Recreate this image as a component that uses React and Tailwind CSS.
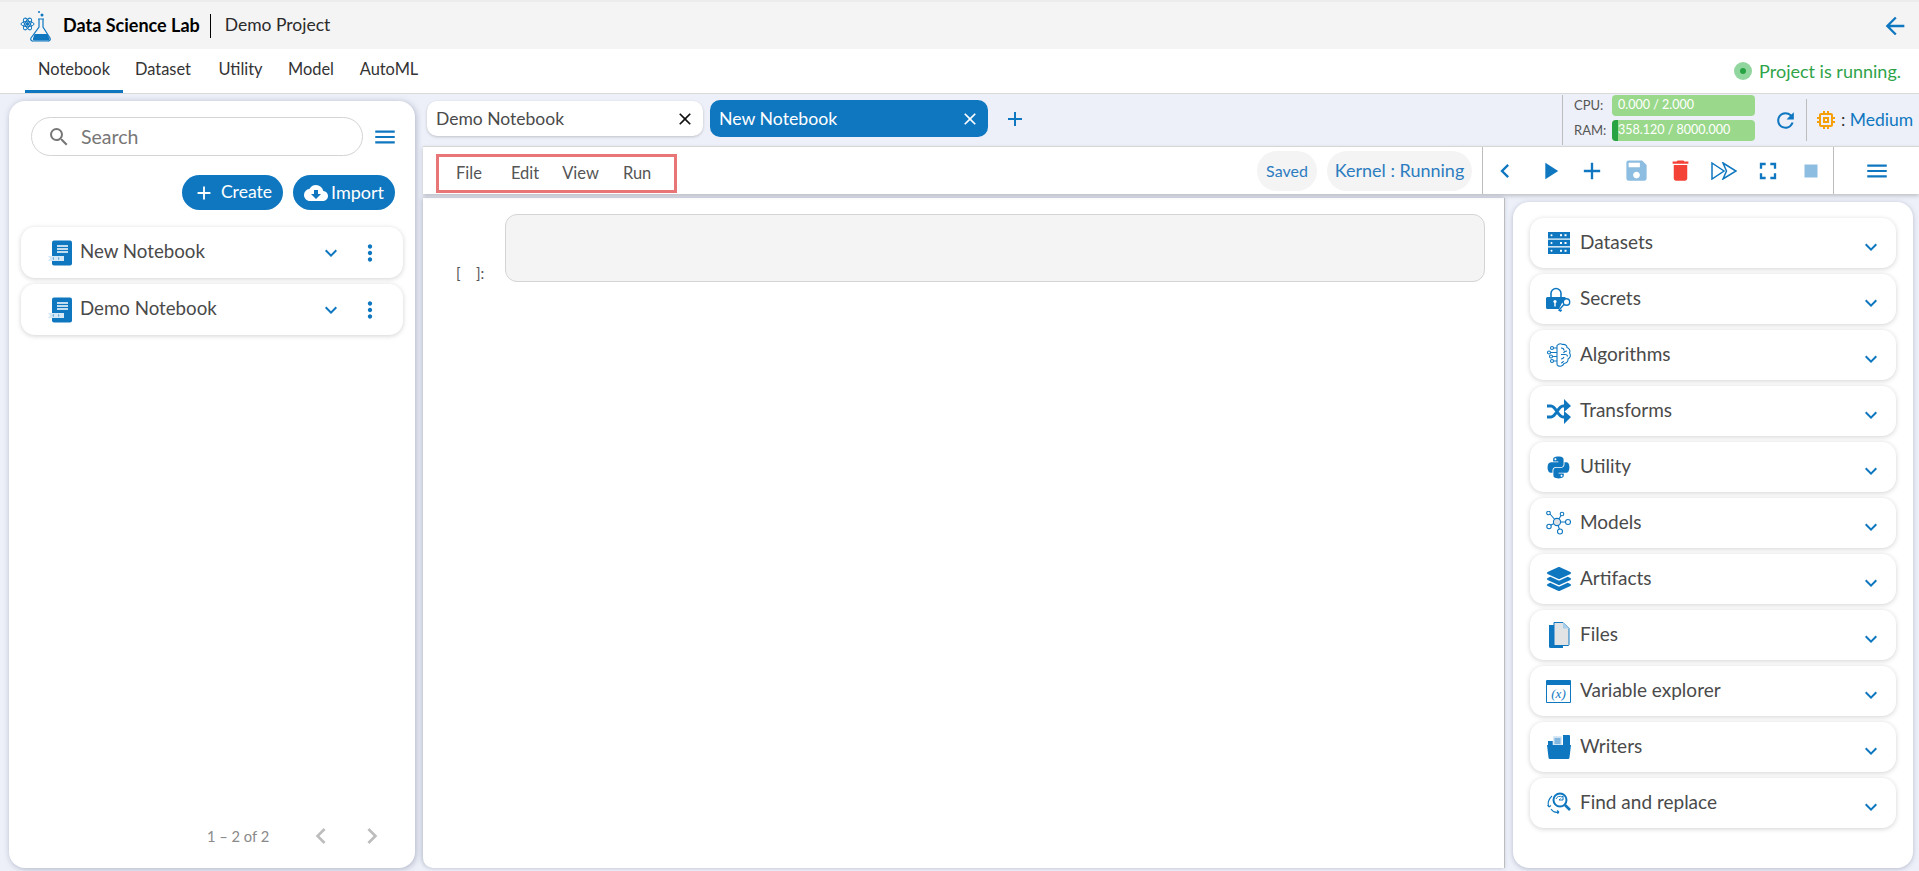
import React from 'react';
import {
  MdArrowBack, MdSearch, MdMenu, MdAdd, MdCloudDownload, MdExpandMore, MdMoreVert, MdClose,
  MdPlayArrow, MdSave, MdDelete, MdFullscreen, MdStop, MdRefresh, MdMemory,
  MdChevronLeft, MdChevronRight,
} from 'react-icons/md';
import { FaPython, FaLayerGroup } from 'react-icons/fa';

const BLUE = '#0f77c0';

const LabLogo = () => (
  <svg width="32" height="32" viewBox="0 0 32 32" fill="none" stroke={BLUE} strokeWidth="1">
    <ellipse cx="7.5" cy="14" rx="6.5" ry="2.6" transform="rotate(60 7.5 14)" />
    <ellipse cx="7.5" cy="14" rx="6.5" ry="2.6" transform="rotate(-60 7.5 14)" />
    <ellipse cx="7.5" cy="14" rx="6.5" ry="2.6" />
    <circle cx="7.5" cy="14" r="1.4" fill={BLUE} />
    <path d="M18 9h6M19 9v8L11 28a2 2 0 0 0 2 3h15a2 2 0 0 0 2-3l-7-11V9" strokeWidth="1.2" />
    <path d="M14.5 24h13l2 5a1.5 1.5 0 0 1-1.5 1.5H14a1.5 1.5 0 0 1-1-2z" fill={BLUE} stroke="none" />
    <circle cx="22" cy="5" r="1.5" fill={BLUE} stroke="none" />
    <circle cx="19" cy="2" r="1" fill={BLUE} stroke="none" />
  </svg>
);

const NotebookIcon = () => (
  <svg width="24" height="26" viewBox="0 0 24 26">
    <rect x="4" y="0.5" width="20" height="25" rx="2" fill={BLUE} />
    <path d="M9 6h11M9 9h11M9 12h11" stroke="#fff" strokeWidth="1.3" />
    <path d="M0 16h16v5H0l2-2.5z" fill="#d5e8f6" />
    <path d="M6 17.5l-1.2 1 1.2 1M10 17.5l1.2 1-1.2 1" stroke={BLUE} strokeWidth="0.7" fill="none" />
  </svg>
);

const DatasetsIcon = () => (
  <svg width="22" height="22" viewBox="0 0 22 22" fill={BLUE}>
    <rect width="22" height="6.5" />
    <rect y="7.7" width="22" height="6.5" />
    <rect y="15.5" width="22" height="6.5" />
    <g fill="#fff">
      <circle cx="3.5" cy="3.2" r="1" /><rect x="12" y="2.2" width="2" height="2" /><rect x="16.5" y="2.2" width="2" height="2" />
      <circle cx="3.5" cy="11" r="1" /><rect x="12" y="10" width="2" height="2" /><rect x="16.5" y="10" width="2" height="2" />
      <circle cx="3.5" cy="18.8" r="1" /><rect x="12" y="17.8" width="2" height="2" /><rect x="16.5" y="17.8" width="2" height="2" />
    </g>
  </svg>
);

const SecretsIcon = () => (
  <svg width="25" height="25" viewBox="0 0 25 25">
    <path d="M5 10V6.5a5 5 0 0 1 10 0V10" fill="none" stroke={BLUE} strokeWidth="1.6" />
    <path d="M1.5 10h17a1.5 1.5 0 0 1 1.5 1.5v2.5l-4 2-3 6H1.5A1.5 1.5 0 0 1 0 20.5v-9A1.5 1.5 0 0 1 1.5 10z" fill={BLUE} />
    <circle cx="9" cy="14.5" r="1.6" fill="#fff" />
    <rect x="8.3" y="15" width="1.4" height="4.5" fill="#fff" />
    <circle cx="20.5" cy="15" r="3.2" fill="#fff" stroke={BLUE} strokeWidth="1.4" />
    <path d="M18 17.5l-5 5.5 1.5 1 1.2-1.2" fill="none" stroke={BLUE} strokeWidth="1.4" />
  </svg>
);

const AlgorithmsIcon = () => (
  <svg width="25" height="25" viewBox="0 0 25 25" fill="none" stroke={BLUE} strokeWidth="1.1">
    <path d="M11 2.5C12.500 .8 15 .5 16.500 1.500c2.500-.5 4.500 1 4.500 3 2.500.8 3.500 3.500 2.500 5.500 1.500 2 1 5-1.500 6 .3 2.500-1.500 4.500-4 4.500-1 2.500-4 3.500-6 2.200-.7-.4-1-.9-1-1.700V2.500z" />
    <path d="M15 5c2 0 3 1 3 2.500M21 8c-1.500 0-3 .5-3.500 2M15 11.500h4c1.500 0 2.500 1 2.500 2M15 16c1.500 0 2.500-.8 3-2M15 20c1 0 2-.7 2.500-2" />
    <path d="M11 5H7.500M11 9.500H4.500M11 13.500H6.500M11 18H7.500" />
    <circle cx="6" cy="5" r="1.500" /><circle cx="3" cy="9.500" r="1.500" /><circle cx="5" cy="13.500" r="1.500" /><circle cx="6" cy="18" r="1.500" />
  </svg>
);

const TransformsIcon = () => (
  <svg width="24" height="25" viewBox="0 0 24 25">
    <path d="M0 7h4c5 0 7 11 12 11h3M0 18h4c5 0 7-11 12-11h3" fill="none" stroke={BLUE} strokeWidth="3" />
    <path d="M17 0l7 7-7 6zM17 12l7 6-7 7z" fill={BLUE} />
  </svg>
);

const ModelsIcon = () => (
  <svg width="25" height="24" viewBox="0 0 25 24" fill="none" stroke={BLUE} strokeWidth="1.1">
    <path d="M11 11L4 3M11 11L16 3M11 11H20M11 11L3 15M11 11L14 20" />
    <circle cx="11" cy="11" r="3.600" fill="#dfe3e8" />
    <circle cx="2.500" cy="2" r="1.800" fill="#fff" /><circle cx="16" cy="3" r="1.800" fill="#fff" />
    <circle cx="22" cy="11" r="2.500" fill="#fff" /><circle cx="3" cy="15.500" r="2.200" fill="#fff" />
    <circle cx="14" cy="20.500" r="2.500" fill="#fff" />
  </svg>
);

const FilesIcon = () => (
  <svg width="23" height="26" viewBox="0 0 23 26">
    <path d="M2 3h6v20h8v3H3.500A1.500 1.500 0 0 1 2 24.500z" fill={BLUE} />
    <path d="M7 .5h9l6 6v16a1 1 0 0 1-1 1H7z" fill="#e2e3e5" stroke={BLUE} strokeWidth="1" />
    <path d="M16 .5v6h6z" fill="#a8cfe9" />
  </svg>
);

const VariableIcon = () => (
  <div className="w-[25px] h-[23px] border border-[#0f77c0] flex items-end justify-center border-t-[5px] rounded-[1px]">
    <span className="text-[#0f77c0] text-[13px] italic leading-[16px] [font-family:'Liberation_Serif',serif]">(x)</span>
  </div>
);

const WritersIcon = () => (
  <svg width="24" height="24" viewBox="0 0 24 24">
    <path d="M1 6h5v4H1zM16 0h6a1 1 0 0 1 1 1v9h-7z" fill={BLUE} />
    <rect x="6" y="1" width="9" height="11" fill="#cde3f3" stroke="#fff" strokeWidth="0.5" />
    <path d="M7.500 4h6M7.500 6h6M7.500 8h6" stroke={BLUE} strokeWidth="0.8" />
    <path d="M0 10h24l-1.500 12.500a1.500 1.500 0 0 1-1.500 1.500H3a1.500 1.500 0 0 1-1.500-1.500z" fill={BLUE} />
  </svg>
);

const FindIcon = () => (
  <svg width="24" height="22" viewBox="0 0 24 22" fill="none" stroke={BLUE}>
    <circle cx="13" cy="8" r="6.500" strokeWidth="2" />
    <path d="M18 13l5 5" strokeWidth="2.600" />
    <path d="M9 7a4 4 0 0 1 6-2l1-1v4h-4l1.500-1.500" strokeWidth="1" />
    <path d="M5 4C2 7 0 11 2 15M2 15l-1.500-2M2 15l2-1.500M4 17c2 3 5 4 8 3M12 20l-2-1.500M12 20l-1.500 1.800" strokeWidth="1.100" />
  </svg>
);

const DoubleArrowIcon = () => (
  <svg width="26" height="18" viewBox="0 0 26 18" fill="none" stroke={BLUE} strokeWidth="1.500">
    <path d="M1 1l12 8-12 8z" />
    <path d="M12 1l13 8-13 8 3.500-8z" />
  </svg>
);

const sideItems = [
  { name: 'Datasets', icon: <DatasetsIcon /> },
  { name: 'Secrets', icon: <SecretsIcon /> },
  { name: 'Algorithms', icon: <AlgorithmsIcon /> },
  { name: 'Transforms', icon: <TransformsIcon /> },
  { name: 'Utility', icon: <FaPython size={25} color={BLUE} /> },
  { name: 'Models', icon: <ModelsIcon /> },
  { name: 'Artifacts', icon: <FaLayerGroup size={24} color={BLUE} /> },
  { name: 'Files', icon: <FilesIcon /> },
  { name: 'Variable explorer', icon: <VariableIcon /> },
  { name: 'Writers', icon: <WritersIcon /> },
  { name: 'Find and replace', icon: <FindIcon /> },
];

const navItems = [
  { name: 'Notebook', w: 'w-[98px]', ml: 'ml-[25px]', active: true },
  { name: 'Dataset', w: 'w-[58px]', ml: 'ml-[11px]' },
  { name: 'Utility', w: 'w-[45px]', ml: 'ml-[26px]' },
  { name: 'Model', w: 'w-[46px]', ml: 'ml-[25px]' },
  { name: 'AutoML', w: 'w-[58px]', ml: 'ml-[26px]' },
];

const toolButtons = [
  <MdChevronLeft size={28} color={BLUE} />,
  <MdPlayArrow size={28} color={BLUE} className="ml-[3px]" />,
  <MdAdd size={28} color={BLUE} />,
  <MdSave size={27} color="#8dbde0" />,
  <MdDelete size={27} color="#f44336" />,
  <DoubleArrowIcon />,
  <MdFullscreen size={28} color={BLUE} />,
  <MdStop size={26} color="#8dbde0" />,
];

const NotebookCard = ({ name }) => (
  <div className="h-[51px] rounded-[14px] bg-white shadow-[0_1px_5px_rgba(0,0,0,0.18)] flex items-center pl-[27px]">
    <NotebookIcon />
    <span className="ml-[8px] text-[18.7px] text-[#4a4a4a] -mt-[2px]">{name}</span>
    <MdExpandMore size={24} color={BLUE} className="ml-auto" />
    <MdMoreVert size={26} color={BLUE} className="ml-[14px] mr-[20px]" />
  </div>
);

const App = () => {
  return (
    <div className="h-screen w-full flex flex-col overflow-hidden bg-[#edf0f8] [font-family:Lato,'Noto_Sans',sans-serif]">
      <header className="h-[49px] shrink-0 bg-[#f4f4f4] flex items-center pl-[20px] pr-[10px] border-t-2 border-[#ececec]">
        <LabLogo />
        <span className="ml-[11px] text-[18px] font-bold text-black">Data Science Lab</span>
        <span className="ml-[10px] w-px h-[24px] bg-black" />
        <span className="ml-[14px] text-[17.5px] text-[#2b2b2b]">Demo Project</span>
        <MdArrowBack size={28} color={BLUE} className="ml-auto" />
      </header>

      <nav className="h-[45px] shrink-0 bg-white border-b border-[#d9d9d9] flex items-stretch">
        {navItems.map((item) => (
          <div
            key={item.name}
            className={`${item.ml} ${item.w} flex items-center justify-center text-[16.4px] text-[#333] whitespace-nowrap border-b-[3px] ${item.active ? 'border-[#0f77c0]' : 'border-transparent'}`}
          >
            {item.name}
          </div>
        ))}
        <div className="ml-auto mr-[18px] flex items-center">
          <span className="w-[18px] h-[18px] rounded-full bg-[#92d69f] flex items-center justify-center">
            <span className="w-[6px] h-[6px] rounded-full bg-[#27a344]" />
          </span>
          <span className="ml-[7px] text-[18px] text-[#2fa34a]">Project is running.</span>
        </div>
      </nav>

      <main className="flex-1 min-h-0 flex">
        <aside className="w-[406px] shrink-0 ml-[9px] mt-[7px] mb-[3px] bg-white rounded-[16px] shadow-[1px_1px_6px_rgba(60,70,110,0.35)] flex flex-col">
          <div className="mt-[16px] ml-[22px] flex items-center">
            <div className="w-[332px] h-[39px] rounded-full border border-[#d4d4d4] flex items-center pl-[15px]">
              <MdSearch size={24} color="#777" />
              <span className="ml-[10px] mt-px text-[19.5px] text-[#777]">Search</span>
            </div>
            <MdMenu size={26} color={BLUE} className="ml-[9px]" />
          </div>
          <div className="mt-[19px] mr-[20px] flex justify-end gap-[10px]">
            <div className="w-[101px] h-[35px] rounded-full bg-[#0f77c0] flex items-center justify-center gap-[6px] text-white text-[17.6px]">
              <MdAdd size={22} />
              Create
            </div>
            <div className="w-[102px] h-[35px] rounded-full bg-[#0f77c0] flex items-center justify-center gap-[3px] text-white text-[18px]">
              <MdCloudDownload size={24} />
              Import
            </div>
          </div>
          <div className="mt-[17px] mx-[12px] flex flex-col gap-[6px]">
            <NotebookCard name="New Notebook" />
            <NotebookCard name="Demo Notebook" />
          </div>
          <div className="mt-auto mb-[16px] flex items-center pl-[198px]">
            <span className="text-[14.7px] text-[#8a8a8a]">1 – 2 of 2</span>
            <MdChevronLeft size={32} color="#bdbdbd" className="ml-[36px]" />
            <MdChevronRight size={32} color="#bdbdbd" className="ml-[19px]" />
          </div>
        </aside>

        <div className="flex-1 min-w-0 ml-[8px] flex flex-col">
          <div className="h-[52px] shrink-0 flex">
            <div className="flex-1 flex items-start pt-[6px]">
              <div className="mt-px ml-[4px] w-[276px] h-[35px] rounded-[10px] bg-white shadow-[0_1px_3px_rgba(0,0,0,0.2)] flex items-center pl-[9px] pr-[8px] justify-between">
                <span className="mt-px text-[17.5px] text-[#4a4a4a]">Demo Notebook</span>
                <MdClose size={20} color="#111" />
              </div>
              <div className="ml-[7px] w-[278px] h-[37px] rounded-[10px] bg-[#0f77c0] flex items-center pl-[9px] pr-[8px] justify-between">
                <span className="mt-px text-[17.7px] text-white">New Notebook</span>
                <MdClose size={20} color="#fff" />
              </div>
              <MdAdd size={24} color={BLUE} className="ml-[15px] mt-[7px]" />
            </div>
            <div className="w-[357px] shrink-0 flex items-center border-l border-[#bdbdbd] my-[1px] pl-[11px]">
              <div className="w-[38px] -mt-[4px] text-[13px] text-[#555] flex flex-col gap-[8px] leading-[17px]">
                <span>CPU:</span>
                <span>RAM:</span>
              </div>
              <div className="w-[143px] -mt-[4px] flex flex-col gap-[4px]">
                <div className="h-[21px] rounded-[4px] bg-[#9ad98b] pl-[6px] flex items-center text-[12.5px] text-white">0.000 / 2.000</div>
                <div className="h-[21px] rounded-[4px] bg-[#9ad98b] flex items-center text-[12.5px] text-white overflow-hidden">
                  <span className="w-[6px] h-full bg-[#27a344] shrink-0" />
                  358.120 / 8000.000
                </div>
              </div>
              <MdRefresh size={25} color={BLUE} className="ml-[18px]" />
              <span className="ml-[8px] w-px h-[42px] bg-[#bdbdbd]" />
              <MdMemory size={24} color="#f59f0a" className="ml-[7px]" />
              <span className="ml-[3px] text-[17.5px] text-[#0f77c0] whitespace-nowrap"><span className="text-[#333]">:</span> Medium</span>
            </div>
          </div>

          <div className="h-[48px] shrink-0 bg-white border-t border-[#d6d6d6] shadow-[0_2px_4px_rgba(0,0,0,0.2)] flex items-center z-10">
            <div className="ml-[13px] mt-[5px] w-[241px] h-[39px] border-[3px] border-[#e97676] flex items-center text-[16.5px] text-[#555]">
              <span className="ml-[17px]">File</span>
              <span className="ml-[29px]">Edit</span>
              <span className="ml-[23px]">View</span>
              <span className="ml-[24px]">Run</span>
            </div>
            <div className="ml-auto h-[40px] w-[60px] rounded-full bg-[#f4f4f4] flex items-center justify-center text-[16px] text-[#2c7cc0]">Saved</div>
            <div className="ml-[10px] h-[40px] w-[145px] rounded-full bg-[#f4f4f4] flex items-center justify-center text-[18px] text-[#2c7cc0] whitespace-nowrap">Kernel : Running</div>
            <div className="ml-[10px] h-full w-[437px] border-l border-[#bdbdbd] flex items-center">
              {toolButtons.map((button, i) => (
                <span key={i} className="w-[43.8px] h-full flex items-center justify-center shrink-0">{button}</span>
              ))}
              <span className="w-px h-full bg-[#bdbdbd]" />
              <span className="flex-1 flex justify-center"><MdMenu size={26} color={BLUE} /></span>
            </div>
          </div>

          <div className="flex-1 min-h-0 flex mt-[4px] mb-[3px]">
            <div className="w-[1082px] shrink-0 bg-white rounded-bl-[10px] border-r border-[#bdbdbd] shadow-[-1px_0_4px_rgba(60,70,110,0.3)] flex items-start pt-[16px] pl-[33px]">
              <span className="self-start mt-[48px] w-[49px] text-[15px] text-[#555] whitespace-pre">[    ]:</span>
              <div className="w-[980px] h-[68px] rounded-[12px] border border-[#d4d4d4] bg-[#f4f4f4]" />
            </div>
            <aside className="w-[400px] shrink-0 ml-[8px] mt-[4px] bg-white rounded-[16px] shadow-[0_1px_5px_rgba(60,70,110,0.3)] pt-[16px] px-[17px]">
              <div className="flex flex-col gap-[6px]">
                {sideItems.map((item) => (
                  <div key={item.name} className="h-[50px] rounded-[14px] bg-white shadow-[0_1px_5px_rgba(0,0,0,0.18)] flex items-center pl-[16px] pr-[13px]">
                    <span className="w-[25px] h-[26px] flex items-center justify-center shrink-0">{item.icon}</span>
                    <span className="ml-[9px] text-[19px] text-[#4a4a4a] -mt-[2px]">{item.name}</span>
                    <MdExpandMore size={24} color={BLUE} className="ml-auto mt-[8px]" />
                  </div>
                ))}
              </div>
            </aside>
          </div>
        </div>
      </main>
    </div>
  );
};

export default App;
